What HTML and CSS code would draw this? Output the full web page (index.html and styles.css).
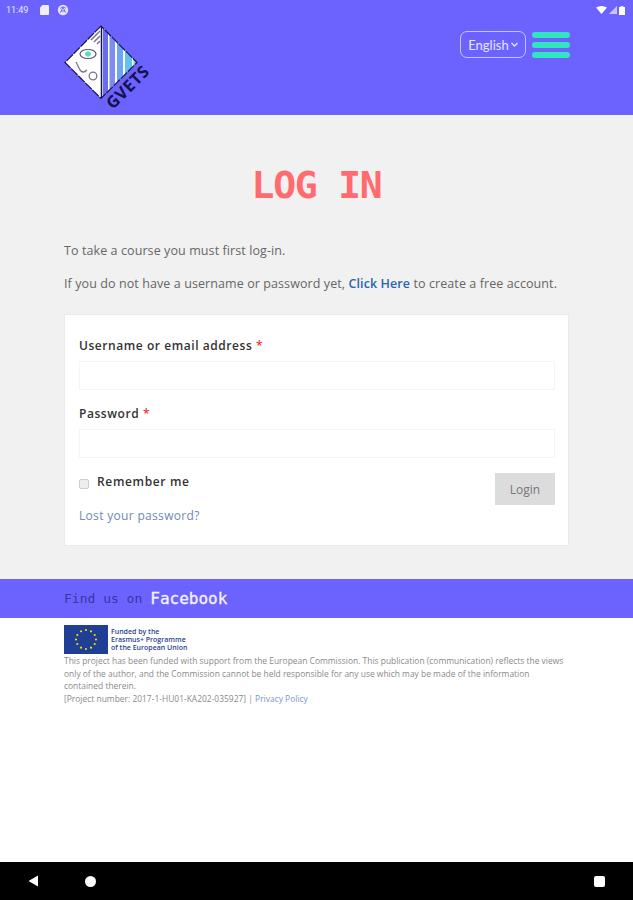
FILE: index.html
```html
<!DOCTYPE html>
<html lang="en">
<head>
<meta charset="utf-8">
<title>Log in</title>
<link rel="stylesheet" href="styles.css">
</head>
<body>
<div class="screen">
  <header class="header">
    <div class="status">
      <div class="status-left">
        <span class="clock">11:49</span>
        <svg class="st-icon" width="9" height="10" viewBox="0 0 9 10"><path d="M2.5 0H8a1 1 0 0 1 1 1v8a1 1 0 0 1-1 1H1a1 1 0 0 1-1-1V2.5z" fill="#eef"/></svg>
        <svg class="st-icon" width="12" height="12" viewBox="0 0 12 12"><circle cx="6" cy="6" r="5.2" fill="#e6e6ff"/><path d="M3 4.5c2-2 4-2 6 0M3.5 8.5L6 3l2.500 5.500M4 7h4" fill="none" stroke="#6c63ff" stroke-width="1"/></svg>
      </div>
      <div class="status-right">
        <svg width="11" height="8" viewBox="0 0 11 8"><path d="M0 1.500Q5.500-1.500 11 1.500L5.500 8z" fill="#fff"/></svg>
        <svg width="8" height="8" viewBox="0 0 8 8"><path d="M0 8L8 0V8z" fill="#c9c6ff"/></svg>
        <svg width="6" height="9" viewBox="0 0 6 9"><path d="M1.500 1V.3h3V1H6v8H0V1z" fill="#fff"/></svg>
      </div>
    </div>
    <div class="brand-row">
      <svg class="logo" width="90" height="90" viewBox="0 0 90 90">
        <path d="M37 1L1 37.500L37 73.500L73 37.500z" fill="#fff"/>
        <path d="M39 3L44 8V67L39 72z" fill="#6a6cf0"/>
        <path d="M45.500 9.500L51 15V59L45.500 64.500z" fill="#7c8cf5"/>
        <path d="M53 17L59 23V51L53 57z" fill="#6ba5f5"/>
        <path d="M61 25L68 32V42L61 49z" fill="#62c4ee"/>
        <path d="M69.500 33.500L73 37.500L69.500 41z" fill="#5fe0d0"/>
        <path d="M37 1L1 37.500L37 73.500L73 37.500z" fill="none" stroke="#15124f" stroke-width="1.200" stroke-dasharray="9 1"/>
        <path d="M37.500 2V73" stroke="#15124f" stroke-width="1.500"/>
        <path d="M36 6L27 15M36 11L30 17M36 16L33 19" stroke="#77758f" stroke-width="1.500"/>
        <ellipse cx="24" cy="29" rx="8" ry="4.500" fill="#fff" stroke="#55536f" stroke-width="1.200"/>
        <circle cx="24" cy="29" r="2.800" fill="#5fd8b8"/>
        <path d="M12 37L16 45Q19 49 23 45" fill="none" stroke="#77758f" stroke-width="1.300"/>
        <circle cx="29" cy="51" r="3.800" fill="none" stroke="#77758f" stroke-width="1.300"/>
        <text class="logo-text" x="0" y="0" transform="translate(49 85) rotate(-45)">GVETS</text>
      </svg>
      <div class="controls">
        <div class="lang">English<svg width="7" height="5" viewBox="0 0 7 5"><path d="M.5 1L3.500 4L6.500 1" fill="none" stroke="#e6e6ff" stroke-width="1.300"/></svg></div>
        <div class="burger"><span></span><span></span><span></span></div>
      </div>
    </div>
  </header>

  <main class="content">
    <h1 class="title">LOG IN</h1>
    <p class="intro">To take a course you must first log-in.</p>
    <p class="intro">If you do not have a username or password yet, <a class="strong-link">Click Here</a> to create a free account.</p>
    <form class="card">
      <label class="label">Username or email address <span class="req">*</span></label>
      <div class="field"></div>
      <label class="label">Password <span class="req">*</span></label>
      <div class="field"></div>
      <div class="actions">
        <div class="remember-col">
          <div class="remember"><span class="check"></span><span class="remember-text">Remember me</span></div>
          <a class="lost">Lost your password?</a>
        </div>
        <div class="login">Login</div>
      </div>
    </form>
  </main>

  <div class="fb-bar"><span class="fb-find">Find us on</span> <span class="fb-name">Facebook</span></div>

  <footer class="footer">
    <div class="eu">
      <svg class="flag" width="44" height="29" viewBox="0 0 44 29">
        <rect width="44" height="29" fill="#1f3f94"/>
        <g fill="#f5d90a">
          <circle cx="22" cy="5" r="1.100"/><circle cx="27" cy="6.300" r="1.100"/><circle cx="30.700" cy="10" r="1.100"/><circle cx="32" cy="14.500" r="1.100"/><circle cx="30.700" cy="19" r="1.100"/><circle cx="27" cy="22.700" r="1.100"/><circle cx="22" cy="24" r="1.100"/><circle cx="17" cy="22.700" r="1.100"/><circle cx="13.300" cy="19" r="1.100"/><circle cx="12" cy="14.500" r="1.100"/><circle cx="13.300" cy="10" r="1.100"/><circle cx="17" cy="6.300" r="1.100"/>
        </g>
      </svg>
      <div class="eu-text">Funded by the<br>Erasmus+ Programme<br>of the European Union</div>
    </div>
    <p class="legal">This project has been funded with support from the European Commission. This publication (communication) reflects the views only of the author, and the Commission cannot be held responsible for any use which may be made of the information contained therein.<br>[Project number: 2017-1-HU01-KA202-035927] | <a class="privacy">Privacy Policy</a></p>
  </footer>

  <nav class="navbar">
    <svg width="11" height="12" viewBox="0 0 11 12"><path d="M10 .5V11.500L.5 6z" fill="#fff"/></svg>
    <span class="nav-home"></span>
    <span class="nav-recent"></span>
  </nav>
</div>
</body>
</html>
```
FILE: styles.css
```css
* { box-sizing: border-box; }
html, body { margin: 0; padding: 0; }
body { background: #fff; font-family: "Open Sans", sans-serif; color: #555; }
.screen { width: 633px; height: 900px; display: flex; flex-direction: column; overflow: hidden; }

.header { height: 115px; background: #6c63ff; flex: none; display: flex; flex-direction: column; }
.status { height: 17px; padding: 3px 8px 0 6px; display: flex; justify-content: space-between; align-items: center; }
.status-left { display: flex; align-items: center; gap: 9px; }
.clock { font: 9px "Roboto", sans-serif; color: #e8e8ff; width: 25px; }
.st-icon { display: block; }
.status-left .st-icon + .st-icon { margin-left: -1px; }
.status-right { display: flex; align-items: center; gap: 2px; }
.brand-row { flex: 1; display: flex; justify-content: space-between; align-items: flex-start; padding: 7px 63px 0 64px; }
.logo { display: block; margin-top: 1px; }
.logo-text { font: bold 16.500px "Open Sans", sans-serif; fill: #15124f; letter-spacing: 0.500px; }
.controls { display: flex; align-items: flex-start; gap: 6px; margin-top: 7px; }
.lang { width: 66px; height: 27px; border: 1px solid #c6c6ff; border-radius: 7px; color: #e6e6ff; font: 13px "Lato", sans-serif; display: flex; align-items: center; justify-content: center; gap: 2px; }
.burger { width: 38px; margin-top: 1px; display: flex; flex-direction: column; gap: 4px; }
.burger span { height: 6px; border-radius: 3px; background: #2fe6c0; }

.content { height: 464px; flex: none; background: #f1f1f1; padding: 47px 64px 0; }
.title { margin: 0 0 33px; font: bold 38px/46px "DejaVu Sans Mono", monospace; letter-spacing: -1.200px; color: #ff6b6f; text-align: center; }
.intro { margin: 0 0 14px; font-size: 12.500px; line-height: 19px; color: #666; letter-spacing: .09px; white-space: nowrap; }
.strong-link { color: #2a66a8; font-weight: 600; }

.card { width: 505px; height: 232px; margin-top: 21px; background: #fff; border: 1px solid #ebebeb; padding: 22px 13px 0 14px; }
.label { display: block; height: 17px; font-size: 12px; line-height: 17px; font-weight: 600; color: #333; letter-spacing: .56px; }
.req { color: #e33; }
.field { height: 29px; margin: 7px 0 15px; background: #fff; border: 1px solid #f5f5f5; }
.actions { display: flex; justify-content: space-between; margin-top: -2px; }
.remember-col { display: flex; flex-direction: column; padding-top: 2px; }
.remember { display: flex; align-items: center; gap: 8px; height: 17px; }
.check { width: 10px; height: 10px; margin-top: 4px; border: 1px solid #ccc; border-radius: 2px; background: #eee; }
.remember-text { font-size: 12px; font-weight: 600; color: #333; letter-spacing: .65px; }
.lost { margin-top: 17px; font-size: 12px; line-height: 17px; color: #6f88b8; letter-spacing: .32px; }
.login { width: 60px; height: 32px; margin-top: 2px; background: #dcdcdc; color: #777; font-size: 12px; display: flex; align-items: center; justify-content: center; }

.fb-bar { height: 39px; flex: none; background: #6c63ff; padding: 0 64px; display: flex; align-items: center; gap: 8px; white-space: nowrap; font-family: "DejaVu Sans Mono", monospace; }
.fb-find { font-size: 13px; color: #3a34a8; }
.fb-name { font-size: 16px; color: #f3f3ff; -webkit-text-stroke: 0.3px #f3f3ff; }

.footer { flex: 1; padding: 7px 64px 0; background: #fff; }
.eu { display: flex; align-items: center; gap: 3px; }
.flag { display: block; flex: none; }
.eu-text { font-size: 7px; line-height: 8px; font-weight: 600; color: #2a3f8f; white-space: nowrap; }
.legal { margin: 1px 0 0; width: 505px; font-size: 8.450px; line-height: 12.700px; color: #8a8a8a; }
.privacy { color: #7d96c6; }

.navbar { height: 38px; flex: none; background: #000; display: flex; align-items: center; padding: 0 28px; }
.nav-home { width: 11px; height: 11px; margin-left: 46px; border-radius: 50%; background: #fff; }
.nav-recent { width: 11px; height: 11px; margin-left: auto; border-radius: 2px; background: #fff; }
```
